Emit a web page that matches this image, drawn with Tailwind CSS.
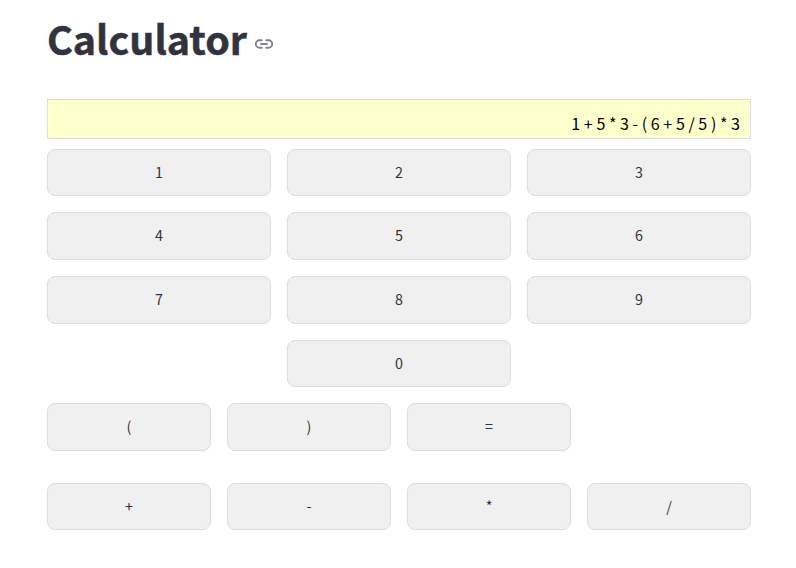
<!DOCTYPE html>
<html lang="en">
<head>
<meta charset="utf-8">
<title>Calculator</title>
<script src="https://cdn.jsdelivr.net/npm/@tailwindcss/browser@4"></script>
</head>
<body class="bg-white text-[#31333f] font-['Noto_Sans_CJK_SC','Noto_Sans',sans-serif]">
<main class="w-[704px] ml-[47px] pt-[11px]">
  <h1 class="flex h-[53px] items-center text-[39.4px] leading-[53px] font-bold">
    <span class="[-webkit-text-stroke:0.5px_#31333f]">Calculator</span>
    <svg class="ml-2 mt-[13px] size-[18px] text-[#31333f]/60" viewBox="0 0 24 24" fill="none" stroke="currentColor" stroke-width="2.5" stroke-linecap="round" stroke-linejoin="round"><path d="M15 7h3a5 5 0 0 1 5 5 5 5 0 0 1-5 5h-3m-6 0H6a5 5 0 0 1-5-5 5 5 0 0 1 5-5h3"/><path d="M8 12h8"/></svg>
  </h1>
  <div class="mt-[35px] h-10 border border-[#dddddd] bg-[#ffffcc] pr-[10px] pt-[9px] text-right text-[16.1px] leading-[28px] text-black">1 + 5 * 3 - ( 6 + 5 / 5 ) * 3</div>
  <div class="mt-[9.8px] grid grid-cols-3 gap-4 text-[14.33px] [&>button]:h-[47.6px] [&>button]:rounded-lg [&>button]:border [&>button]:border-[#dddddd] [&>button]:bg-[#f0f0f0] [&>button]:pb-[2px]">
    <button>1</button><button>2</button><button>3</button>
    <button>4</button><button>5</button><button>6</button>
    <button>7</button><button>8</button><button>9</button>
    <button class="col-start-2">0</button>
  </div>
  <div class="mt-4 grid grid-cols-4 gap-4 text-[14.33px] [&>button]:h-[47.6px] [&>button]:rounded-lg [&>button]:border [&>button]:border-[#dddddd] [&>button]:bg-[#f0f0f0] [&>button]:pb-[2px]">
    <button>(</button><button>)</button><button>=</button>
  </div>
  <div class="mt-8 grid grid-cols-4 gap-4 text-[14.33px] [&>button]:h-[47.6px] [&>button]:rounded-lg [&>button]:border [&>button]:border-[#dddddd] [&>button]:bg-[#f0f0f0] [&>button]:pb-[2px]">
    <button>+</button><button>-</button><button>*</button><button>/</button>
  </div>
</main>
</body>
</html>
